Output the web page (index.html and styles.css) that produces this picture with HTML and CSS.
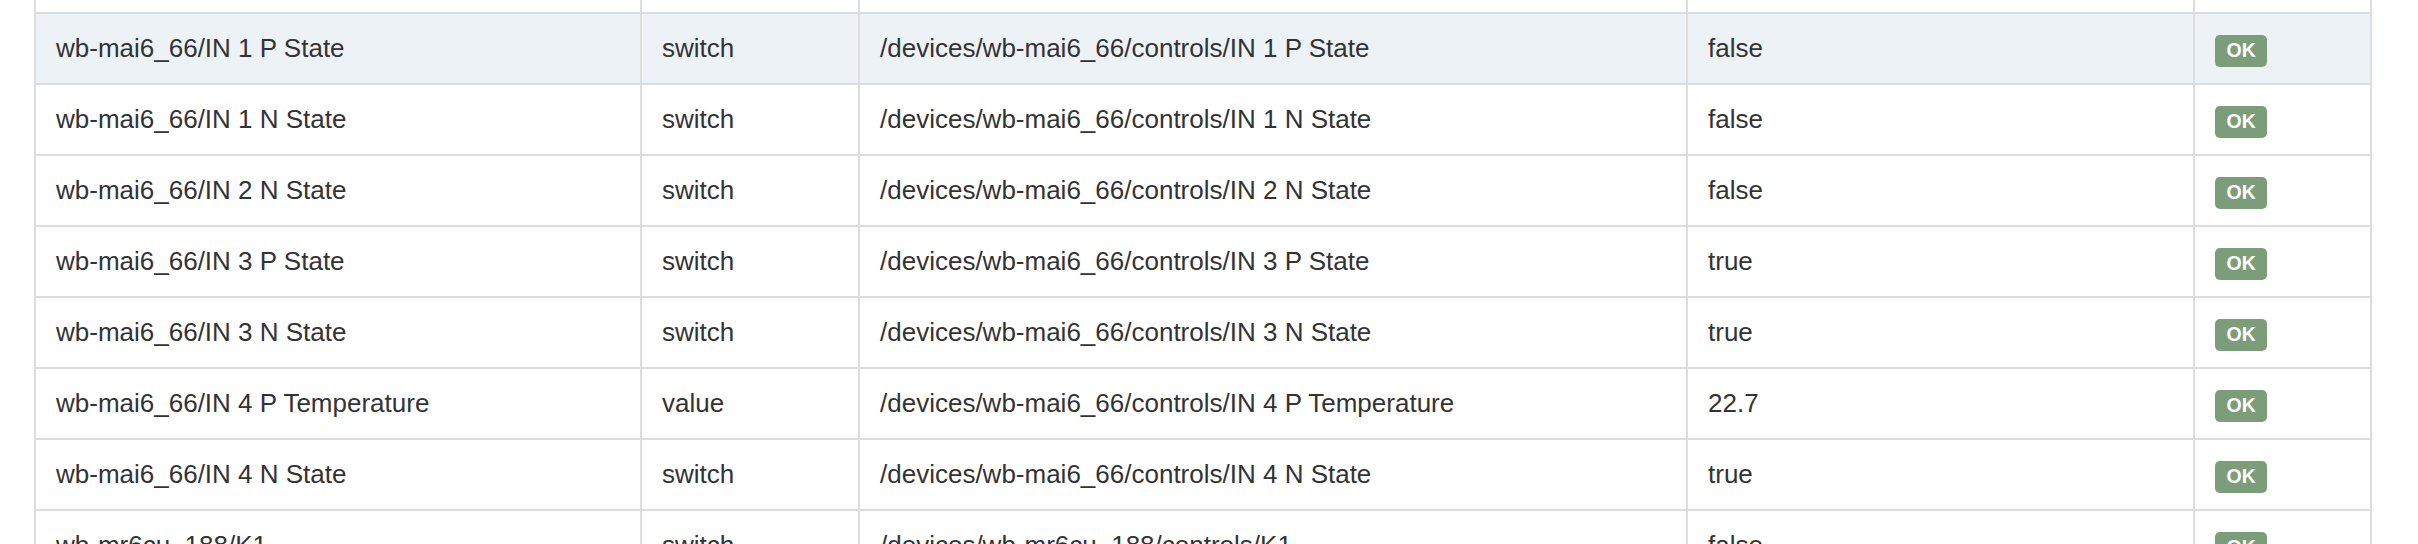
FILE: index.html
```html
<!DOCTYPE html>
<html>
<head>
<meta charset="utf-8">
<link rel="stylesheet" href="styles.css">
</head>
<body>
<div class="viewport">
<table class="controls">
<colgroup>
<col class="c-name"><col class="c-type"><col class="c-topic"><col class="c-value"><col class="c-status">
</colgroup>
<tbody>
<tr class="spacer"><td></td><td></td><td></td><td></td><td></td></tr>
<tr class="active"><td>wb-mai6_66/IN 1 P State</td><td>switch</td><td>/devices/wb-mai6_66/controls/IN 1 P State</td><td>false</td><td><span class="badge">OK</span></td></tr>
<tr><td>wb-mai6_66/IN 1 N State</td><td>switch</td><td>/devices/wb-mai6_66/controls/IN 1 N State</td><td>false</td><td><span class="badge">OK</span></td></tr>
<tr><td>wb-mai6_66/IN 2 N State</td><td>switch</td><td>/devices/wb-mai6_66/controls/IN 2 N State</td><td>false</td><td><span class="badge">OK</span></td></tr>
<tr><td>wb-mai6_66/IN 3 P State</td><td>switch</td><td>/devices/wb-mai6_66/controls/IN 3 P State</td><td>true</td><td><span class="badge">OK</span></td></tr>
<tr><td>wb-mai6_66/IN 3 N State</td><td>switch</td><td>/devices/wb-mai6_66/controls/IN 3 N State</td><td>true</td><td><span class="badge">OK</span></td></tr>
<tr><td>wb-mai6_66/IN 4 P Temperature</td><td>value</td><td>/devices/wb-mai6_66/controls/IN 4 P Temperature</td><td>22.7</td><td><span class="badge">OK</span></td></tr>
<tr><td>wb-mai6_66/IN 4 N State</td><td>switch</td><td>/devices/wb-mai6_66/controls/IN 4 N State</td><td>true</td><td><span class="badge">OK</span></td></tr>
<tr><td>wb-mr6cu_188/K1</td><td>switch</td><td>/devices/wb-mr6cu_188/controls/K1</td><td>false</td><td><span class="badge">OK</span></td></tr>
</tbody>
</table>
</div>
</body>
</html>
```
FILE: styles.css
```css
html, body {
  margin: 0;
  padding: 0;
  background: #ffffff;
}
.viewport {
  height: 544px;
  overflow: hidden;
  padding-left: 34px;
}
.controls {
  border-collapse: collapse;
  table-layout: fixed;
  width: 2338px;
  font-family: "Liberation Sans", Arial, sans-serif;
  font-size: 26px;
  line-height: 37px;
  color: #333333;
}
.c-name { width: 606px; }
.c-type { width: 218px; }
.c-topic { width: 828px; }
.c-value { width: 507px; }
.c-status { width: 177px; }
.controls td {
  border: 2px solid #dddddd;
  padding: 16px 20px;
  text-align: left;
  vertical-align: top;
  white-space: nowrap;
}
.controls tr.spacer td {
  border-top: 0;
  padding: 0;
  height: 12px;
  line-height: 0;
}
.controls tr.active td {
  background: #edf2f6;
}
.badge {
  display: inline-block;
  font-size: 19.5px;
  font-weight: bold;
  line-height: 20px;
  padding: 5px 11.5px 7px;
  border-radius: 5px;
  background: #7c9d79;
  color: #ffffff;
}
```
